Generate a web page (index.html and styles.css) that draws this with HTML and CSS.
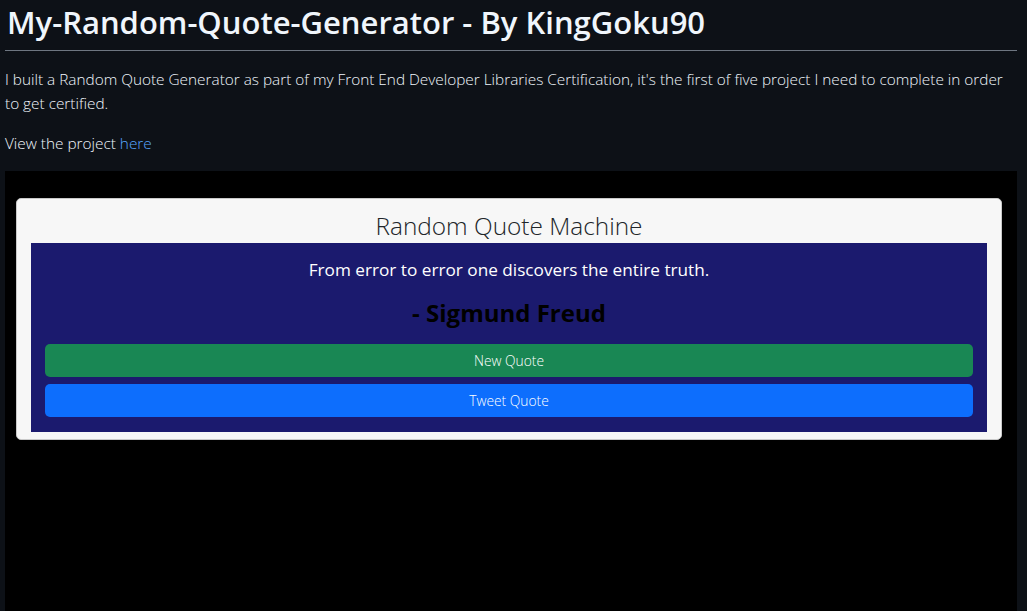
FILE: index.html
```html
<!DOCTYPE html>
<html lang="en">
<head>
<meta charset="utf-8">
<title>My-Random-Quote-Generator</title>
<link rel="stylesheet" href="styles.css">
</head>
<body>
<main class="readme">
  <h1 class="readme-title">My-Random-Quote-Generator - By KingGoku90</h1>
  <p class="readme-text">I built a Random Quote Generator as part of my Front End Developer Libraries Certification, it's the first of five project I need to complete in order to get certified.</p>
  <p class="readme-text">View the project <a class="readme-link" href="#">here</a></p>
  <section class="preview">
    <div class="quote-card">
      <h2 class="quote-card-title">Random Quote Machine</h2>
      <div class="quote-box">
        <p class="quote-text">From error to error one discovers the entire truth.</p>
        <h3 class="quote-author">- Sigmund Freud</h3>
        <button class="btn btn-new" type="button">New Quote</button>
        <button class="btn btn-tweet" type="button">Tweet Quote</button>
      </div>
    </div>
  </section>
</main>
</body>
</html>
```
FILE: styles.css
```css
html, body {
  margin: 0;
  padding: 0;
  background: #0d1117;
  height: 100%;
  overflow: hidden;
}

.readme {
  margin: 0 10px 0 5px;
  font-family: "Open Sans", "Noto Sans", sans-serif;
  color: #e6edf3;
}

.readme-title {
  margin: 0;
  padding: 2px 0 8px 2px;
  font-size: 31px;
  line-height: 40px;
  font-weight: 600;
  color: #f0f6fc;
  border-bottom: 1px solid #6e7681;
}

.readme-text {
  margin: 16px 0 0 0;
  font-size: 15.35px;
  line-height: 24px;
  font-weight: 300;
  color: #f0f6fc;
}

.readme-link {
  color: #58a6ff;
  text-decoration: none;
}

.preview {
  margin-top: 16px;
  background: #000;
  height: 440px;
  padding: 27px 15px 0 11px;
}

.quote-card {
  background: #f7f7f7;
  border: 1px solid #c9c9c9;
  border-radius: 5px;
  padding: 0 14px 7px 14px;
  font-family: "Open Sans", "Noto Sans", sans-serif;
}

.quote-card-title {
  margin: 0;
  height: 44px;
  padding-top: 11px;
  box-sizing: border-box;
  text-align: center;
  font-size: 24.4px;
  line-height: 32px;
  font-weight: 300;
  color: #212529;
}

.quote-box {
  background: #1b1a6e;
  padding: 14px 14px 15px 14px;
  display: flex;
  flex-direction: column;
  gap: 7px;
}

.quote-text {
  margin: 0;
  text-align: center;
  color: #fff;
  font-size: 17.2px;
  line-height: 26px;
}

.quote-author {
  margin: 8px 0 9px 0;
  text-align: center;
  color: #000;
  font-size: 24px;
  line-height: 30px;
  font-weight: 700;
}

.btn {
  height: 33px;
  border: none;
  border-radius: 5px;
  color: #fff;
  font-family: "Open Sans", "Noto Sans", sans-serif;
  font-size: 13.8px;
  font-weight: 300;
}

.btn-new {
  background: #198754;
}

.btn-tweet {
  background: #0d6efd;
}
```
